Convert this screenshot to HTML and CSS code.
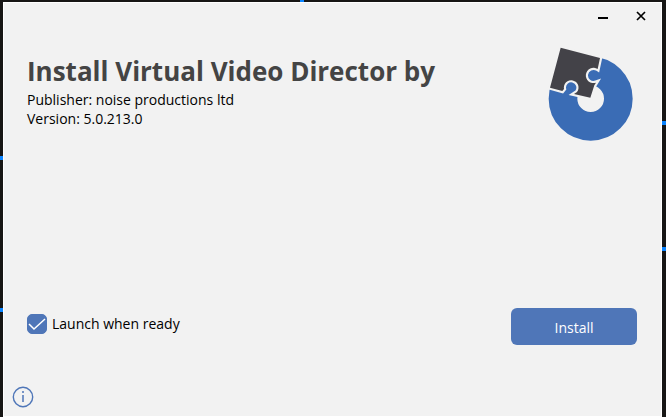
FILE: index.html
```html
<!DOCTYPE html>
<html lang="en">
<head>
  <meta charset="UTF-8" />
  <meta name="viewport" content="width=device-width, initial-scale=1" />
  <title>Install Virtual Video Director</title>
  <link rel="stylesheet" href="styles.css">
</head>
<body>

  <div class="window">
    <div class="title-bar">
      <button class="title-button" type="button" aria-label="Minimize">
        <svg width="10" height="10" viewBox="0 0 10 10"><path d="M0 7h10" stroke="#000" stroke-width="2" /></svg>
      </button>
      <button class="title-button" type="button" aria-label="Close">
        <svg width="10" height="10" viewBox="0 0 10 10"><path d="M1 1l8 8M9 1l-8 8" stroke="#000" stroke-width="1.7" /></svg>
      </button>
    </div>

    <header>
      <div class="app-info">
        <h1>Install Virtual Video Director by</h1>
        <p>Publisher: noise productions ltd</p>
        <p>Version: 5.0.213.0</p>
      </div>
      <svg class="logo" viewBox="36 34 258 282" aria-hidden="true">
        <circle cx="164" cy="189" r="83" fill="none" stroke="#3a6cb5" stroke-width="86" />
        <path class="piece" d="M74 36L192 67L185 100A23 23 0 1 0 180 141L175 149L163 186L114 175L123 169A22 22 0 1 0 84 160L79 166L42 156Z" />
      </svg>
    </header>

    <main>
      <label class="launch">
        <input type="checkbox" checked>
        <span>Launch when ready</span>
      </label>
      <button class="install" type="button">Install</button>
    </main>

    <footer>
      <button class="info" type="button" aria-label="About">
        <svg width="22" height="22" viewBox="0 0 22 22">
          <circle cx="11" cy="11" r="9.7" fill="none" stroke="#4f76b8" stroke-width="1.4" />
          <path d="M11 9v7M11 5v2" stroke="#4f76b8" stroke-width="1.5" />
        </svg>
      </button>
    </footer>
  </div>

</body>
</html>
```
FILE: styles.css
```css
* {
  box-sizing: border-box;
}

body {
  margin: 0;
  min-height: 100vh;
  padding: 2px 4px 0 3px;
  display: flex;
  font-family: 'Open Sans', 'Noto Sans', sans-serif;
  font-size: 14px;
  color: #000;
  background-color: #171615;
  /* blue lines of the wallpaper around the window */
  background-image:
    linear-gradient(#0a84ff, #0a84ff),
    linear-gradient(#0a84ff, #0a84ff),
    linear-gradient(#0a84ff, #0a84ff),
    linear-gradient(#0a84ff, #0a84ff),
    linear-gradient(#0a84ff, #0a84ff);
  background-repeat: no-repeat;
  background-size: 4px 4px;
  background-position: 0 156px, 0 308px, right 121px, right 247px, 300px 0;
}

.window {
  flex: 1;
  display: flex;
  flex-direction: column;
  background: #f2f2f2;
  border: 1px solid #fff;
}

.title-bar {
  display: flex;
  justify-content: flex-end;
  gap: 8px;
  padding-right: 5px;
}

button {
  font: inherit;
  border: 0;
  cursor: pointer;
}

.title-button {
  display: flex;
  align-items: center;
  justify-content: center;
  width: 30px;
  height: 26px;
  padding: 0;
  background: none;
}

.title-button:hover {
  background: #ddd;
}

header {
  display: flex;
  justify-content: space-between;
  padding: 18px 27px 0 23px;
}

h1 {
  margin: 5px 0 0;
  font-size: 26px;
  line-height: 38px;
  color: #444;
}

p {
  margin: 0;
  line-height: 19px;
}

.logo {
  flex: none;
  width: 86px;
  height: 94px;
}

.piece {
  fill: #434248;
  stroke: #f2f2f2;
  stroke-width: 13px;
  paint-order: stroke;
}

main {
  display: flex;
  justify-content: space-between;
  align-items: flex-start;
  margin-top: auto;
  padding: 0 24px 0 23px;
}

.launch {
  display: flex;
  align-items: center;
  gap: 5px;
  margin-top: 6px;
  line-height: 20px;
}

.launch input {
  appearance: none;
  width: 20px;
  height: 20px;
  margin: 0;
  border-radius: 5px;
  border: 1px solid #4f76b8;
}

.launch input:checked {
  background: #4f76b8 url("data:image/svg+xml,%3Csvg xmlns='http://www.w3.org/2000/svg' viewBox='0 0 20 20'%3E%3Cpath d='M2 10l5 5L18 5' fill='none' stroke='white' stroke-width='1.5'/%3E%3C/svg%3E") center / 20px 20px;
}

.install {
  width: 126px;
  height: 37px;
  padding: 2px 0 0;
  border-radius: 6px;
  background: #4f76b8;
  color: #fff;
}

.install:hover {
  background: #416aae;
}

footer {
  display: flex;
  padding: 41px 8px 8px;
}

.info {
  display: flex;
  padding: 0;
  background: none;
}
```
